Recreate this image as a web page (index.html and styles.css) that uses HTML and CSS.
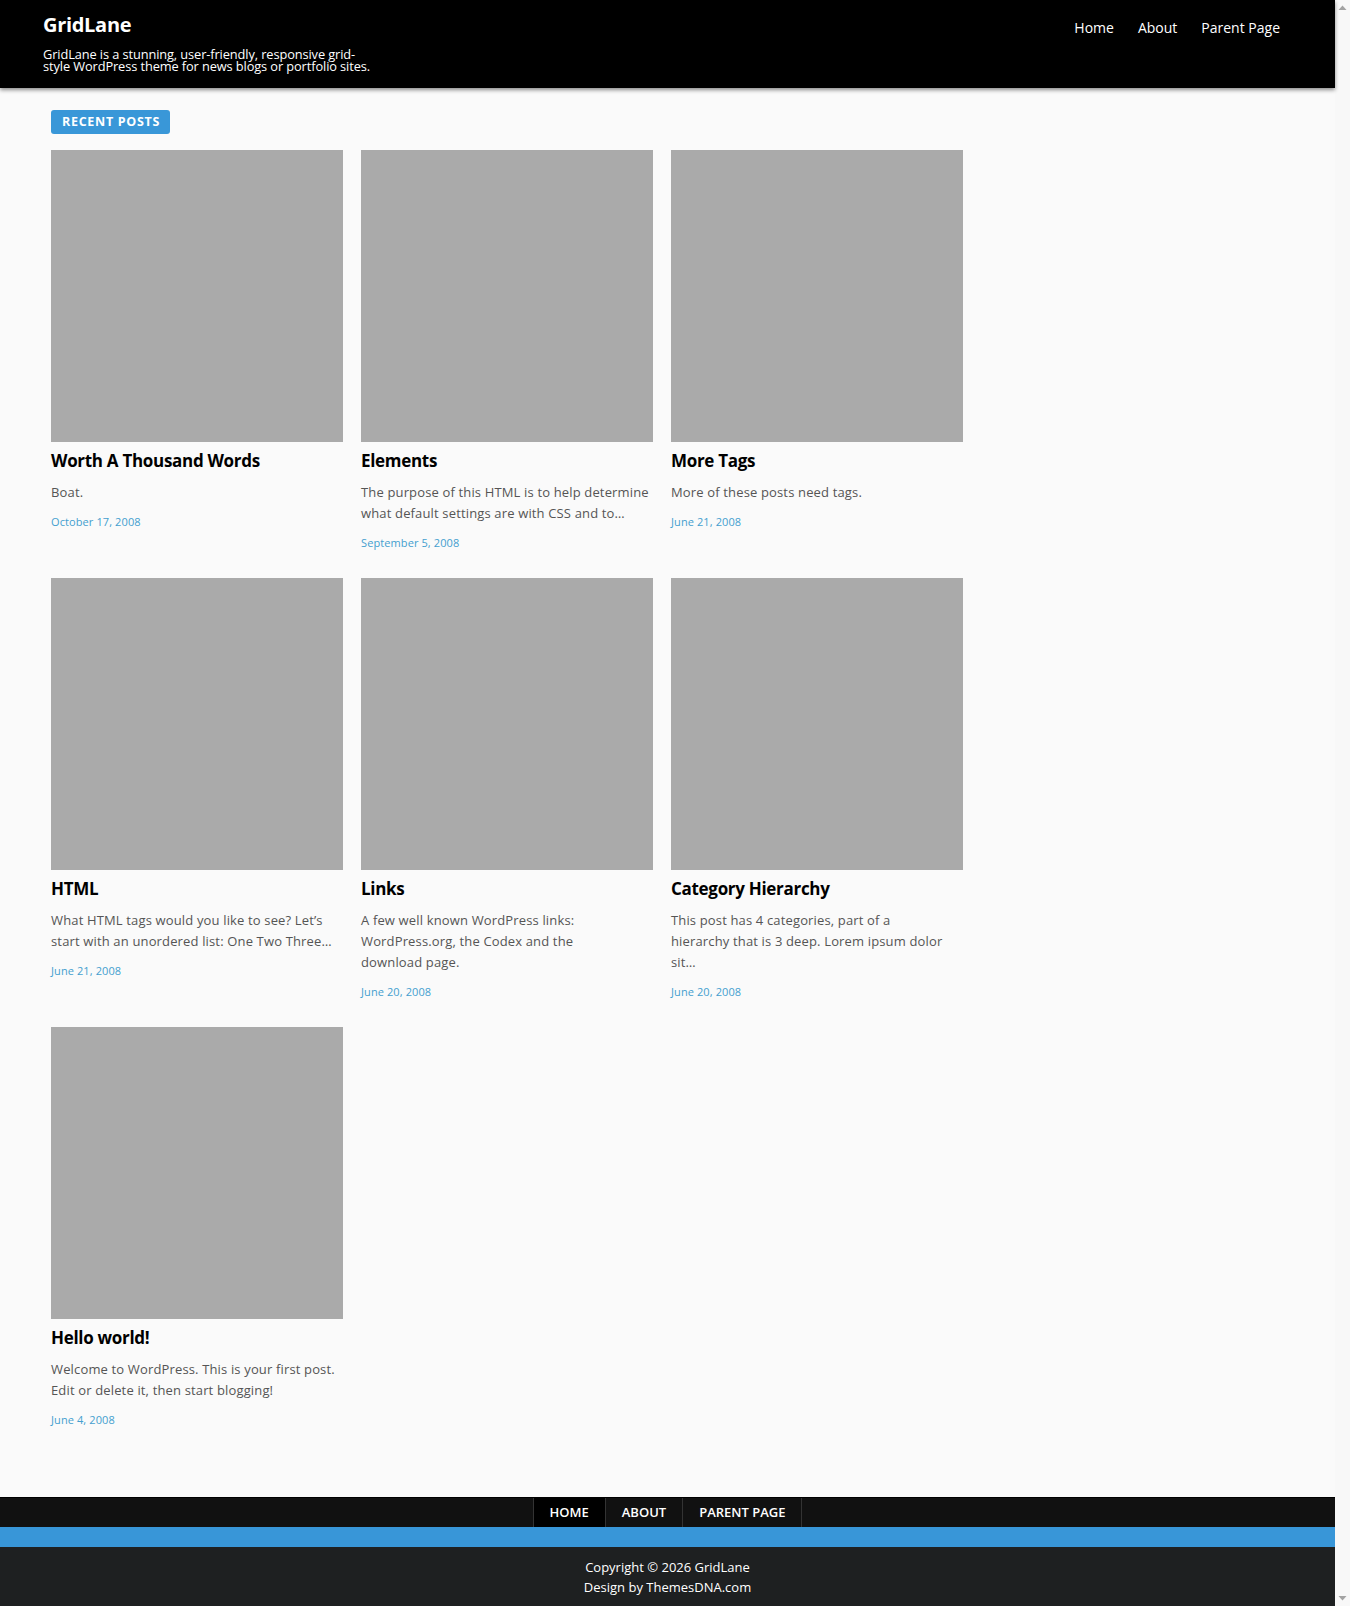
FILE: index.html
```html
<!DOCTYPE html>
<html lang="en">
<head>
<meta charset="utf-8">
<title>GridLane</title>
<link rel="stylesheet" href="styles.css">
</head>
<body>
<div class="page">
  <header class="site-header">
    <div class="header-inner">
      <div class="branding">
        <h1 class="site-title">GridLane</h1>
        <p class="site-desc">GridLane is a stunning, user-friendly, responsive grid-<br>style WordPress theme for news blogs or portfolio sites.</p>
      </div>
      <nav class="primary-nav">
        <a href="#">Home</a>
        <a href="#">About</a>
        <a href="#">Parent Page</a>
      </nav>
    </div>
  </header>

  <main class="site-main">
    <div class="badge">Recent Posts</div>
    <div class="posts">
      <article class="post">
        <div class="thumb"></div>
        <h2 class="post-title">Worth A Thousand Words</h2>
        <p class="excerpt">Boat.</p>
        <div class="date">October 17, 2008</div>
      </article>
      <article class="post">
        <div class="thumb"></div>
        <h2 class="post-title">Elements</h2>
        <p class="excerpt">The purpose of this HTML is to help determine what default settings are with CSS and to…</p>
        <div class="date">September 5, 2008</div>
      </article>
      <article class="post">
        <div class="thumb"></div>
        <h2 class="post-title">More Tags</h2>
        <p class="excerpt">More of these posts need tags.</p>
        <div class="date">June 21, 2008</div>
      </article>
      <article class="post">
        <div class="thumb"></div>
        <h2 class="post-title">HTML</h2>
        <p class="excerpt">What HTML tags would you like to see? Let’s start with an unordered list: One Two Three…</p>
        <div class="date">June 21, 2008</div>
      </article>
      <article class="post">
        <div class="thumb"></div>
        <h2 class="post-title">Links</h2>
        <p class="excerpt">A few well known WordPress links:<br>WordPress.org, the Codex and the<br>download page.</p>
        <div class="date">June 20, 2008</div>
      </article>
      <article class="post">
        <div class="thumb"></div>
        <h2 class="post-title">Category Hierarchy</h2>
        <p class="excerpt">This post has 4 categories, part of a<br>hierarchy that is 3 deep. Lorem ipsum dolor<br>sit…</p>
        <div class="date">June 20, 2008</div>
      </article>
      <article class="post">
        <div class="thumb"></div>
        <h2 class="post-title">Hello world!</h2>
        <p class="excerpt">Welcome to WordPress. This is your first post. Edit or delete it, then start blogging!</p>
        <div class="date">June 4, 2008</div>
      </article>
    </div>
  </main>

  <footer class="site-footer">
    <nav class="footer-nav">
      <a href="#" class="current">HOME</a>
      <a href="#">ABOUT</a>
      <a href="#">PARENT PAGE</a>
    </nav>
    <div class="blue-strip"></div>
    <div class="credits">
      <p>Copyright © 2026 GridLane</p>
      <p>Design by ThemesDNA.com</p>
    </div>
  </footer>
</div>
<div class="scrollbar" aria-hidden="true">
  <svg class="arrow" width="15" height="15" viewBox="0 0 15 15"><path d="M3.5 10 L7.5 5.5 L11.5 10 Z" fill="#a3a3a3"/></svg>
  <svg class="arrow" width="15" height="15" viewBox="0 0 15 15"><path d="M3.5 5 L7.5 9.5 L11.5 5 Z" fill="#a3a3a3"/></svg>
</div>
</body>
</html>
```

FILE: styles.css
```css
* { box-sizing: border-box; }

html, body {
  margin: 0;
  padding: 0;
}

body {
  display: flex;
  background: #fafafa;
  font-family: "Open Sans", "DejaVu Sans", sans-serif;
  color: #555;
  overflow: hidden;
}

a { text-decoration: none; }

.page {
  flex: 1;
  min-width: 0;
}

.scrollbar {
  width: 15px;
  flex: none;
  background: #f8f8f8;
  display: flex;
  flex-direction: column;
  justify-content: space-between;
}

.arrow {
  display: block;
}

.site-header {
  background: #000;
  height: 88px;
  box-shadow: 0 2px 4px rgba(0, 0, 0, 0.45);
  position: relative;
  z-index: 2;
}

.header-inner {
  display: flex;
  justify-content: space-between;
  align-items: flex-start;
  padding: 0 43px;
}

.branding {
  padding-top: 12px;
}

.site-title {
  margin: 0;
  color: #fff;
  font-size: 20px;
  font-weight: 700;
  line-height: 26px;
  letter-spacing: -0.3px;
}

.site-desc {
  margin: 10px 0 0;
  white-space: nowrap;
  color: #fff;
  font-size: 12.8px;
  line-height: 12px;
  letter-spacing: -0.1px;
}

.primary-nav {
  display: flex;
  padding-top: 18px;
}

.primary-nav a {
  color: #fff;
  font-size: 14px;
  line-height: 20px;
  padding: 0 12px;
}

.site-main {
  padding: 21px 51px 0;
}

.badge {
  display: inline-block;
  background: #3997d8;
  color: #fff;
  font-size: 12.5px;
  font-weight: 700;
  text-transform: uppercase;
  letter-spacing: 0.7px;
  line-height: 24px;
  height: 24px;
  padding: 0 10px 0 11px;
  border-radius: 3px;
}

.posts {
  display: grid;
  grid-template-columns: repeat(3, 292px);
  column-gap: 18px;
  row-gap: 27px;
  margin-top: 16px;
  padding-bottom: 69px;
}

.thumb {
  width: 292px;
  height: 292px;
  background: #aaa;
}

.post-title {
  margin: 8px 0 0;
  color: #000;
  font-size: 17px;
  font-weight: 700;
  line-height: 22px;
  letter-spacing: -0.3px;
}

.excerpt {
  margin: 10px 0 0;
  font-size: 13px;
  line-height: 21px;
  letter-spacing: 0.15px;
  color: #555;
}

.date {
  margin-top: 11px;
  font-size: 11px;
  line-height: 16px;
  letter-spacing: 0.1px;
  color: #449fcf;
}

.site-footer {
  background: #1e2021;
}

.footer-nav {
  background: #111;
  border-top: 1px solid #000;
  height: 30px;
  display: flex;
  justify-content: center;
}

.footer-nav a {
  color: #fff;
  font-size: 13px;
  font-weight: 600;
  line-height: 29px;
  padding: 0 16px;
  border-right: 1px solid #333;
}

.footer-nav a:first-child {
  border-left: 1px solid #333;
}

.footer-nav a.current {
  background: #000;
}

.blue-strip {
  height: 20px;
  background: #3896d8;
}

.credits {
  padding: 10px 0 9px;
  text-align: center;
}

.credits p {
  margin: 0;
  color: #fff;
  font-size: 13px;
  line-height: 20px;
}
```
